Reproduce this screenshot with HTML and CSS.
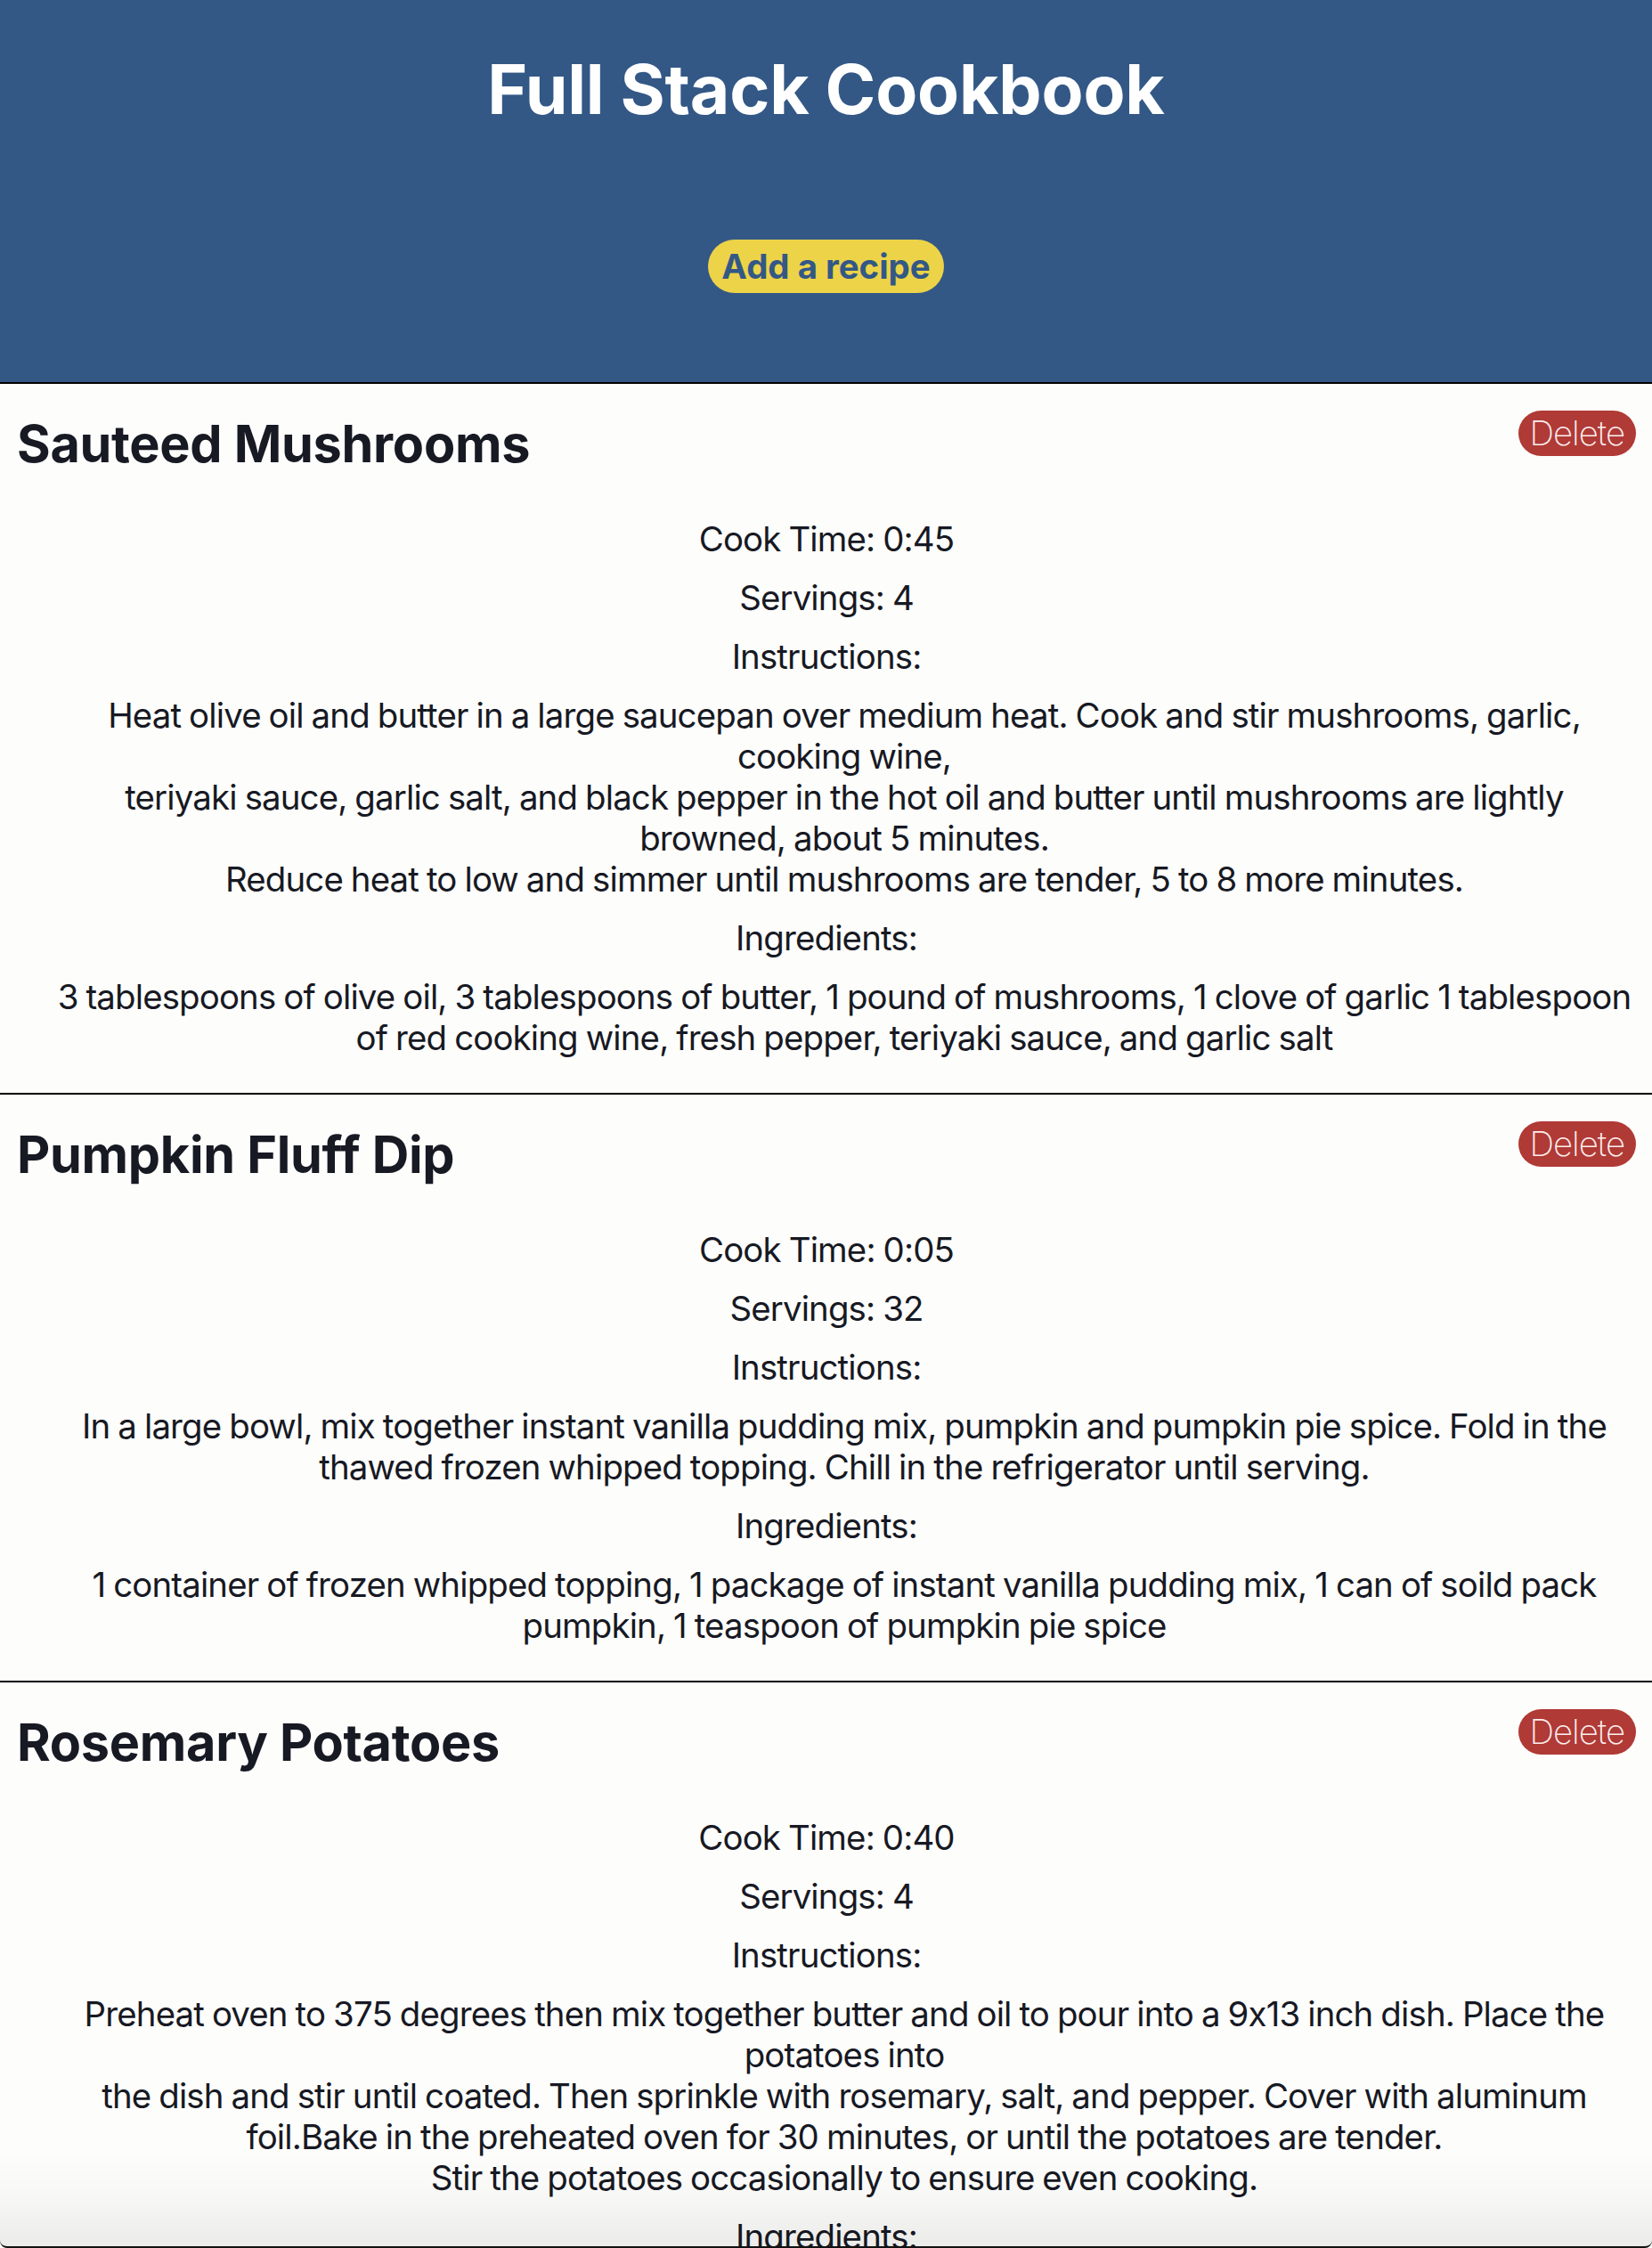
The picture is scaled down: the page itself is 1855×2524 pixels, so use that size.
FILE: index.html
```html
<!DOCTYPE html>
<html lang="en">
<head>
<meta charset="utf-8">
<title>Full Stack Cookbook</title>
<link rel="stylesheet" href="styles.css">
</head>
<body>
<header class="site-header">
  <h1 class="site-title">Full Stack Cookbook</h1>
  <button class="add-btn">Add a recipe</button>
</header>
<main class="recipes">
  <section class="recipe">
    <div class="recipe-head">
      <h2 class="recipe-name">Sauteed Mushrooms</h2>
      <button class="delete-btn">Delete</button>
    </div>
    <div class="recipe-body">
      <p class="label">Cook Time: 0:45</p>
      <p class="label">Servings: 4</p>
      <p class="label">Instructions:</p>
      <p class="content">Heat olive oil and butter in a large saucepan over medium heat. Cook and stir mushrooms, garlic, cooking wine,<br>teriyaki sauce, garlic salt, and black pepper in the hot oil and butter until mushrooms are lightly browned, about 5 minutes.<br>Reduce heat to low and simmer until mushrooms are tender, 5 to 8 more minutes.</p>
      <p class="label">Ingredients:</p>
      <p class="content">3 tablespoons of olive oil, 3 tablespoons of butter, 1 pound of mushrooms, 1 clove of garlic 1 tablespoon of red cooking wine, fresh pepper, teriyaki sauce, and garlic salt</p>
    </div>
  </section>
  <section class="recipe">
    <div class="recipe-head">
      <h2 class="recipe-name">Pumpkin Fluff Dip</h2>
      <button class="delete-btn">Delete</button>
    </div>
    <div class="recipe-body">
      <p class="label">Cook Time: 0:05</p>
      <p class="label">Servings: 32</p>
      <p class="label">Instructions:</p>
      <p class="content">In a large bowl, mix together instant vanilla pudding mix, pumpkin and pumpkin pie spice. Fold in the thawed frozen whipped topping. Chill in the refrigerator until serving.</p>
      <p class="label">Ingredients:</p>
      <p class="content">1 container of frozen whipped topping, 1 package of instant vanilla pudding mix, 1 can of soild pack pumpkin, 1 teaspoon of pumpkin pie spice</p>
    </div>
  </section>
  <section class="recipe">
    <div class="recipe-head">
      <h2 class="recipe-name">Rosemary Potatoes</h2>
      <button class="delete-btn">Delete</button>
    </div>
    <div class="recipe-body">
      <p class="label">Cook Time: 0:40</p>
      <p class="label">Servings: 4</p>
      <p class="label">Instructions:</p>
      <p class="content">Preheat oven to 375 degrees then mix together butter and oil to pour into a 9x13 inch dish. Place the potatoes into<br>the dish and stir until coated. Then sprinkle with rosemary, salt, and pepper. Cover with aluminum foil.Bake in the preheated oven for 30 minutes, or until the potatoes are tender.<br>Stir the potatoes occasionally to ensure even cooking.</p>
      <p class="label">Ingredients:</p>
      <p class="content">3 potatoes, 2 tablespoons of butter, 2 tablespoons of olive oil, rosemary, salt, and pepper</p>
    </div>
  </section>
</main>
<div class="window-edge"></div>
</body>
</html>
```
FILE: styles.css
```css
* { box-sizing: border-box; }

html, body {
  margin: 0;
  padding: 0;
}

body {
  background: #fdfdfc;
  color: #171923;
  font-family: Inter, "Noto Sans", "Liberation Sans", sans-serif;
}

.site-header {
  background: #335886;
  border-bottom: 2px solid #000;
  height: 431px;
  padding-top: 54px;
  display: flex;
  flex-direction: column;
  align-items: center;
}

.site-title {
  margin: 0;
  color: #ffffff;
  font-size: 76.8px;
  line-height: 93px;
  font-weight: 700;
  letter-spacing: -0.2px;
}

.add-btn {
  margin-top: 122px;
  height: 60px;
  padding: 0 15px;
  border: none;
  border-radius: 30px;
  background: #ecd348;
  color: #335886;
  font-family: inherit;
  font-size: 38.4px;
  font-weight: 700;
  line-height: 60px;
}

.recipe {
  padding: 30px 18px 39px 19px;
  border-bottom: 2px solid #000;
}

.recipe-head {
  display: flex;
  justify-content: space-between;
  align-items: flex-start;
}

.recipe-name {
  margin: 2px 0 0;
  font-size: 57.6px;
  line-height: 70px;
  font-weight: 700;
  letter-spacing: -0.3px;
}

.delete-btn {
  height: 51px;
  padding: 0 13px 0 12px;
  border: none;
  border-radius: 26px;
  background: #b03a36;
  color: #fbeeee;
  font-family: inherit;
  font-size: 38.4px;
  font-weight: 200;
  line-height: 51px;
  letter-spacing: -1px;
}

.recipe-body {
  margin-top: 49px;
  display: flex;
  flex-direction: column;
  gap: 20px;
  text-align: center;
}

.recipe-body p {
  margin: 0;
  font-size: 38.4px;
  line-height: 46px;
  letter-spacing: -0.85px;
  word-spacing: -1px;
}

.recipe-body .content {
  padding-left: 40px;
  font-feature-settings: "calt" 0;
}

.window-edge {
  position: fixed;
  left: 0;
  right: 0;
  bottom: 0;
  height: 110px;
  pointer-events: none;
  background: linear-gradient(to bottom, rgba(0, 0, 0, 0) 0%, rgba(0, 0, 0, 0.025) 50%, rgba(0, 0, 0, 0.07) 100%);
  border-bottom: 2px solid #111;
  border-radius: 0 0 8px 8px;
}
```
